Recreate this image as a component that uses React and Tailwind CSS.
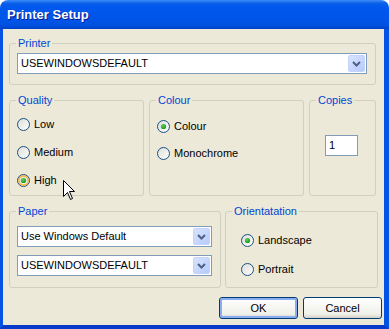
import React from "react";

const font = { fontFamily: '"Liberation Sans", Arial, sans-serif' };

function Radio({ checked, hover }) {
  return (
    <svg width="13" height="13" viewBox="0 0 13 13" className="shrink-0">
      <defs>
        <linearGradient id="rfill" x1="0" y1="0" x2="1" y2="1">
          <stop offset="0" stopColor="#dcdcd7" />
          <stop offset="1" stopColor="#ffffff" />
        </linearGradient>
        <radialGradient id="rdot" cx="0.4" cy="0.35" r="0.6">
          <stop offset="0" stopColor="#5fd15f" />
          <stop offset="1" stopColor="#1c9b1c" />
        </radialGradient>
      </defs>
      <circle cx="6.5" cy="6.5" r="6" fill="url(#rfill)" stroke="#1c5180" strokeWidth="1" />
      {hover && <circle cx="6.5" cy="6.5" r="4.6" fill="none" stroke="#f8b33a" strokeWidth="1.6" />}
      {checked && <circle cx="6.5" cy="6.5" r="2.6" fill="url(#rdot)" />}
    </svg>
  );
}

function RadioRow({ label, checked, hover }) {
  return (
    <div className="flex h-[16px] items-center gap-[4px]">
      <Radio checked={checked} hover={hover} />
      <span className="text-[11px] leading-[13px] text-black">{label}</span>
    </div>
  );
}

function Combo({ value, width }) {
  return (
    <div
      className="flex h-[21px] items-center border border-[#7f9db9] bg-white"
      style={{ width }}
    >
      <span className="flex-1 pl-[3px] text-[11px] leading-[13px] text-black">{value}</span>
      <div className="mr-px flex h-[17px] w-[17px] items-center justify-center rounded-[2px] border border-[#c3d3fd] bg-[linear-gradient(135deg,#d8e4fe,#b6cafb)]">
        <svg width="11" height="8" viewBox="0 0 11 8">
          <path d="M2 2 L5.5 5.5 L9 2" fill="none" stroke="#4d6185" strokeWidth="2" />
        </svg>
      </div>
    </div>
  );
}

function Group({ label, className, children }) {
  return (
    <fieldset className={`m-0 min-w-0 rounded-[3px] border border-[#d0d0bf] p-0 ${className}`}>
      <legend className="ml-[6px] px-[2px] text-[11px] leading-[13px] text-[#0046d5]">{label}</legend>
      {children}
    </fieldset>
  );
}

function Button({ label, focused }) {
  return (
    <button
      className={`flex h-[22px] w-[79px] items-center justify-center rounded-[3px] border border-[#003c74] bg-[linear-gradient(to_bottom,#ffffff,#f0f0ea_80%,#d6d0c5)] text-[11px] text-black ${
        focused ? "shadow-[inset_0_0_0_2px_#89adf0]" : ""
      }`}
    >
      {label}
    </button>
  );
}

export default function App() {
  return (
    <div className="relative h-[329px] w-[389px] bg-white" style={font}>
      {/* title bar */}
      <div className="flex h-[29px] items-center rounded-t-[8px] bg-[linear-gradient(to_bottom,#3d8cf8_0%,#0a5fe9_12%,#0058ee_25%,#0055ea_60%,#0051e0_88%,#003fc6_100%)] pl-[7px]">
        <span className="text-[13px] font-bold text-white [text-shadow:1px_1px_#0a1a8a]">
          Printer Setup
        </span>
      </div>

      {/* window frame */}
      <div className="h-[300px] border-b-[4px] border-l-[3px] border-r-[5px] border-[#0553e2] border-b-[#0a3ac8]">
        <div className="flex h-[296px] flex-col bg-[#ece9d8] pl-[6px] pt-[8px]">
          <Group label="Printer" className="h-[48px] w-[367px]">
            <div className="ml-[7px] mt-[3px]">
              <Combo value="USEWINDOWSDEFAULT" width={350} />
            </div>
          </Group>

          <div className="mt-[9px] flex gap-[5px]">
            <Group label="Quality" className="h-[102px] w-[135px]">
              <div className="flex flex-col gap-[12px] pl-[7px] pt-[9px]">
                <RadioRow label="Low" />
                <RadioRow label="Medium" />
                <RadioRow label="High" checked hover />
              </div>
            </Group>
            <Group label="Colour" className="h-[102px] w-[155px]">
              <div className="flex flex-col gap-[11px] pl-[7px] pt-[11px]">
                <RadioRow label="Colour" checked />
                <RadioRow label="Monochrome" />
              </div>
            </Group>
            <Group label="Copies" className="h-[102px] w-[67px]">
              <div className="ml-[15px] mt-[28px] flex h-[21px] w-[33px] items-center border border-[#7f9db9] bg-white pl-[3px] text-[11px] text-black">
                1
              </div>
            </Group>
          </div>

          <div className="mt-[9px] flex gap-[4px]">
            <Group label="Paper" className="h-[83px] w-[212px]">
              <div className="ml-[7px] mt-[8px] flex flex-col gap-[8px]">
                <Combo value="Use Windows Default" width={195} />
                <Combo value="USEWINDOWSDEFAULT" width={195} />
              </div>
            </Group>
            <Group label="Orientatation" className="h-[83px] w-[153px]">
              <div className="flex flex-col gap-[13px] pl-[15px] pt-[14px]">
                <RadioRow label="Landscape" checked />
                <RadioRow label="Portrait" />
              </div>
            </Group>
          </div>

          <div className="mt-[9px] flex justify-end gap-[5px] pr-[2px]">
            <Button label="OK" focused />
            <Button label="Cancel" />
          </div>
        </div>
      </div>

      {/* mouse cursor */}
      <svg
        className="absolute left-[63px] top-[180px]"
        width="13"
        height="21"
        viewBox="0 0 13 21"
      >
        <path
          d="M0.5 0.5 L0.5 16.5 L4.5 12.5 L7.5 19.5 L9.5 18.5 L6.5 11.5 L11.5 11.5 Z"
          fill="#fff"
          stroke="#000"
          strokeWidth="1"
        />
      </svg>
    </div>
  );
}
